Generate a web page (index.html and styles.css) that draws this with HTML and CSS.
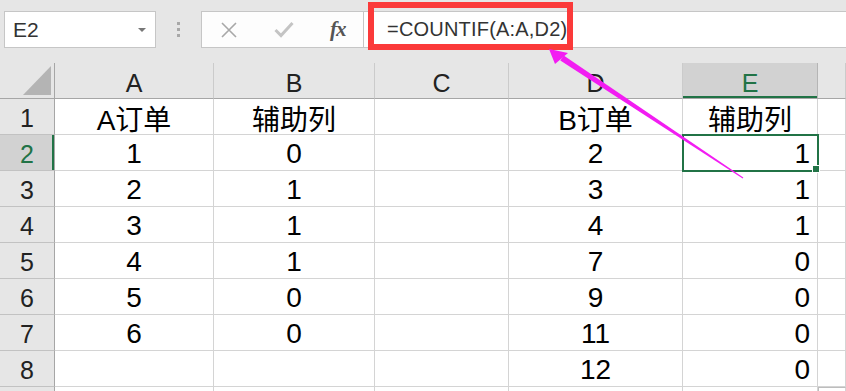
FILE: index.html
```html
<!DOCTYPE html>
<html lang="zh-CN">
<head>
<meta charset="utf-8">
<title>COUNTIF</title>
<link rel="stylesheet" href="styles.css">
</head>
<body>
<div class="app">
  <div class="toolbar">
    <div class="namebox"><span class="ref">E2</span><span class="caret"></span></div>
    <div class="grip"><i></i><i></i><i></i></div>
    <div class="fxbtns">
      <svg class="ico" width="18" height="16" viewBox="0 0 18 16"><path d="M2 1 L16 15 M16 1 L2 15" stroke="#a8a8a8" stroke-width="1.6" fill="none"/></svg>
      <svg class="ico ok" width="20" height="17" viewBox="0 0 20 17"><path d="M1.5 9 L7 14.5 L18.5 2" stroke="#c4c4c4" stroke-width="3" fill="none"/></svg>
      <span class="fx">fx</span>
    </div>
    <div class="formula">=COUNTIF(A:A,D2)</div>
  </div>

  <div class="sheet">
    <div class="corner"><span class="tri"></span></div>
    <div class="ch">A</div><div class="ch">B</div><div class="ch">C</div><div class="ch">D</div><div class="ch sel">E</div><div class="ch"></div>

    <div class="rh">1</div><div class="c ctr">A订单</div><div class="c ctr">辅助列</div><div class="c"></div><div class="c ctr">B订单</div><div class="c ctr">辅助列</div><div class="c"></div>
    <div class="rh sel">2</div><div class="c ctr">1</div><div class="c ctr">0</div><div class="c"></div><div class="c ctr">2</div><div class="c rt active">1<span class="handle"></span></div><div class="c"></div>
    <div class="rh">3</div><div class="c ctr">2</div><div class="c ctr">1</div><div class="c"></div><div class="c ctr">3</div><div class="c rt">1</div><div class="c"></div>
    <div class="rh">4</div><div class="c ctr">3</div><div class="c ctr">1</div><div class="c"></div><div class="c ctr">4</div><div class="c rt">1</div><div class="c"></div>
    <div class="rh">5</div><div class="c ctr">4</div><div class="c ctr">1</div><div class="c"></div><div class="c ctr">7</div><div class="c rt">0</div><div class="c"></div>
    <div class="rh">6</div><div class="c ctr">5</div><div class="c ctr">0</div><div class="c"></div><div class="c ctr">9</div><div class="c rt">0</div><div class="c"></div>
    <div class="rh">7</div><div class="c ctr">6</div><div class="c ctr">0</div><div class="c"></div><div class="c ctr">11</div><div class="c rt">0</div><div class="c"></div>
    <div class="rh">8</div><div class="c"></div><div class="c"></div><div class="c"></div><div class="c ctr">12</div><div class="c rt">0</div><div class="c"></div>
    <div class="rh"></div><div class="c"></div><div class="c"></div><div class="c"></div><div class="c"></div><div class="c"></div><div class="c last"></div>
  </div>

  <div class="redbox"></div>
  <svg class="arrow" width="846" height="391" viewBox="0 0 846 391">
    <polygon points="563.7,55.5 743.3,177.6 742.7,178.4 560.3,60.5" fill="#f21df2"/>
    <polygon points="549,49 568,53 555,64" fill="#f21df2"/>
  </svg>
</div>
</body>
</html>
```

FILE: styles.css
```css
* { box-sizing: border-box; }
html, body { margin: 0; padding: 0; }
body {
  width: 846px;
  height: 391px;
  overflow: hidden;
  background: #e6e6e6;
  font-family: "Liberation Sans", "Noto Sans CJK SC", sans-serif;
}
.app {
  position: relative;
  width: 846px;
  height: 391px;
  overflow: hidden;
}
.toolbar {
  height: 63px;
  display: flex;
  align-items: flex-start;
  padding-top: 11px;
  padding-left: 4px;
  background: #e6e6e6;
}
.namebox {
  width: 152px;
  height: 37px;
  background: #fff;
  border: 1px solid #c6c6c6;
  display: flex;
  align-items: center;
  justify-content: space-between;
  padding: 0 9px 0 8px;
}
.ref {
  font-family: "Liberation Sans", sans-serif;
  font-size: 21px;
  color: #333;
}
.caret {
  width: 0;
  height: 0;
  border-left: 4px solid transparent;
  border-right: 4px solid transparent;
  border-top: 4px solid #777;
}
.grip {
  width: 45px;
  height: 37px;
  display: flex;
  flex-direction: column;
  align-items: center;
  justify-content: center;
  gap: 3px;
}
.grip i {
  display: block;
  width: 3px;
  height: 3px;
  background: #a8a8a8;
}
.fxbtns {
  width: 162px;
  height: 37px;
  background: #fdfdfd;
  border: 1px solid #c6c6c6;
  border-right: none;
  display: flex;
  align-items: center;
  padding-left: 18px;
}
.ico { display: block; }
.ok { margin-left: 36px; }
.fx {
  margin-left: 36px;
  font-family: "Liberation Serif", serif;
  font-style: italic;
  font-weight: bold;
  font-size: 21px;
  color: #555;
  letter-spacing: -1px;
}
.formula {
  flex: 1;
  height: 37px;
  background: #fff;
  border: 1px solid #c6c6c6;
  border-right: none;
  padding-left: 23px;
  display: flex;
  align-items: center;
  font-size: 20px;
  color: #333;
  letter-spacing: 0.2px;
}

.sheet {
  display: grid;
  grid-template-columns: 55px 159px 161px 134px 174px 135px 28px;
  grid-template-rows: 36px repeat(8, 36px) 36px;
  background: #fff;
}
.corner {
  background: #e6e6e6;
  border-right: 1px solid #a6a6a6;
  border-bottom: 1px solid #a6a6a6;
  position: relative;
}
.tri {
  position: absolute;
  right: 3px;
  bottom: 3px;
  width: 0;
  height: 0;
  border-left: 28px solid transparent;
  border-bottom: 29px solid #b4b4b4;
}
.ch {
  background: #e6e6e6;
  border-right: 1px solid #cbcbcb;
  border-bottom: 1px solid #a6a6a6;
  display: flex;
  align-items: center;
  justify-content: center;
  padding-top: 5px;
  font-size: 25px;
  color: #222;
}
.ch.sel {
  background: #d2d2d2;
  color: #217346;
  border-right-color: #b5b5b5;
  box-shadow: inset 0 -2px 0 #217346;
}
.rh {
  background: #e6e6e6;
  border-right: 1px solid #a6a6a6;
  border-bottom: 1px solid #c2c2c2;
  display: flex;
  align-items: center;
  justify-content: center;
  padding-top: 4px;
  font-size: 25px;
  color: #222;
}
.rh.sel {
  background: #d2d2d2;
  color: #217346;
  box-shadow: inset -2px 0 0 #217346;
}
.c {
  border-right: 1px solid #d4d4d4;
  border-bottom: 1px solid #d4d4d4;
  display: flex;
  align-items: center;
  font-size: 28px;
  color: #000;
  padding-top: 2px;
  white-space: nowrap;
}
.ctr { justify-content: center; }
.rt { justify-content: flex-end; padding-right: 7px; }
.active {
  position: relative;
  outline: 2px solid #217346;
  outline-offset: -1px;
}
.handle {
  position: absolute;
  right: -3px;
  bottom: -3px;
  width: 6px;
  height: 6px;
  background: #217346;
  border: 1px solid #fff;
  box-sizing: content-box;
}
.last { border-left: 1px solid #bdbdbd; border-top: 1px solid #bdbdbd; }

.redbox {
  position: absolute;
  left: 368px;
  top: 2px;
  width: 205px;
  height: 48px;
  border: 6px solid #fb3a3a;
}
.arrow {
  position: absolute;
  left: 0;
  top: 0;
  pointer-events: none;
}
```
